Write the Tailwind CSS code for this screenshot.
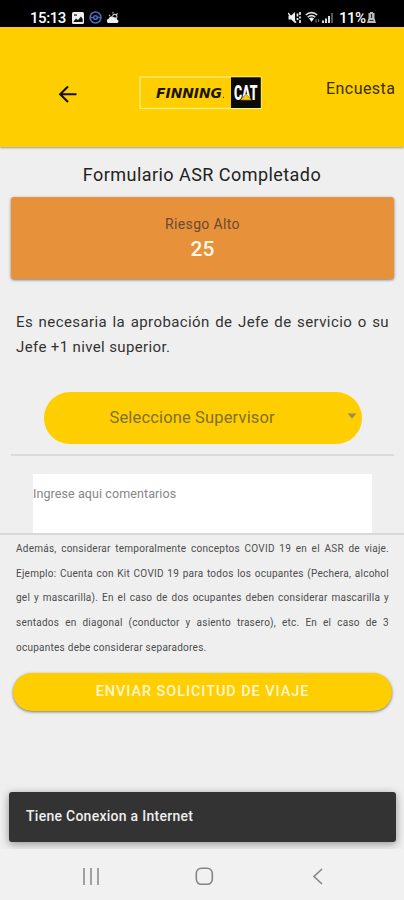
<!DOCTYPE html>
<html lang="es">
<head>
<meta charset="utf-8">
<meta name="viewport" content="width=device-width, initial-scale=1">
<title>Formulario ASR</title>
<script src="https://cdn.jsdelivr.net/npm/@tailwindcss/browser@4"></script>
</head>
<body class="w-[404px] h-[900px] overflow-hidden bg-[#efefef] font-[Roboto,sans-serif] text-[#222] flex flex-col">
  <!-- Status bar -->
  <div class="h-[27px] shrink-0 bg-black text-white flex items-center justify-between pl-[30px] pr-[28px] pt-[8px]">
    <div class="flex items-center">
      <span class="w-[36px] text-[15px] leading-[18px] font-medium tracking-[-0.45px] whitespace-nowrap">15:13</span>
      <svg class="ml-[6px]" width="12" height="12" viewBox="0 0 12 12"><rect width="12" height="12" rx="1.5" fill="#eee"/><path d="M1.5 9.5 4 6.5 6 8l3-3.5 1.7 2.5v3H1.5z" fill="#151515"/><path d="M2 3h3" stroke="#222" stroke-width="1.3"/></svg>
      <svg class="ml-[5px]" width="13" height="13" viewBox="0 0 13 13" fill="none" stroke="#5068b5" stroke-width="1.5"><circle cx="6.5" cy="6.5" r="5.5"/><circle cx="6.5" cy="6.5" r="1.8"/><path d="M1 6.5h3.5M8.5 6.5H12"/></svg>
      <svg class="ml-[5px]" width="12" height="12" viewBox="0 0 12 12"><path d="M2 11a2 2 0 0 1-.4-4A3 3 0 0 1 7 5.5a2.700 2.700 0 0 1 3.300 2.200A1.700 1.700 0 0 1 10 11z" fill="#eee"/><path d="M5.500 4a2.300 2.300 0 0 1 4.500.5c0 .8-.2 1.200-.5 1.500M2 3l1 1M6 0v1.500M10.500 1.500l-1 1" fill="none" stroke="#ccc" stroke-width="1.100"/></svg>
    </div>
    <div class="flex items-center">
      <svg width="14" height="13" viewBox="0 0 14 13"><path d="M.5 4.500h2.700L7 1v11L3.200 8.500H.5z" fill="#eee"/><path d="m0 2 8 9.500" fill="none" stroke="#eee" stroke-width="1.200"/><path d="M9.500 2.500v3M12 1v3M9.500 7v2M12 5.500v2M12 9v3" fill="none" stroke="#eee" stroke-width="1.700"/></svg>
      <svg class="ml-[3px]" width="16" height="13" viewBox="0 0 16 13"><path d="M.8 4A8 8 0 0 1 12.200 4M2.800 6.200a5.200 5.200 0 0 1 7.400 0" fill="none" stroke="#ddd" stroke-width="1.600"/><path d="M4 7.500a3.400 3.400 0 0 1 5 0L6.500 11z" fill="#eee"/><path d="M11 8.500v3M13.500 8v3" stroke="#777" stroke-width="1.200"/></svg>
      <svg class="ml-[1px]" width="12" height="13" viewBox="0 0 12 13"><path d="M0 9.500h2V12H0zM3 7.500h2V12H3zM6 5h2v7H6z" fill="#ddd"/><path d="M9 2h2v10H9z" fill="#555"/></svg>
      <span class="ml-[5px] w-[28px] text-[15px] leading-[18px] font-medium tracking-[-0.5px] whitespace-nowrap">11%</span>
      <svg width="9" height="13" viewBox="0 0 9 13"><path d="M3 1h3v1h1.500v5L9 12H0l1.500-5V2H3z" fill="#bbb"/><path d="M4.500 3v4M2.500 9.500h4" stroke="#333" stroke-width="1.200"/></svg>
    </div>
  </div>

  <!-- App header -->
  <header class="h-[120px] shrink-0 bg-[#ffce00] shadow-[0_1px_2px_rgba(0,0,0,0.35)] flex items-start">
    <svg class="ml-[58px] mt-[58px] shrink-0" width="19" height="18" viewBox="0 0 19 18" fill="none" stroke="#141000" stroke-width="2.100"><path d="M18.500 9.200H2.500M10 1.500 2.200 9.200 10 17"/></svg>
    <svg class="ml-[62px] mt-[49px] shrink-0 overflow-visible" width="123" height="34" viewBox="0 0 123 34">
      <rect x="1" y="1" width="121" height="31.500" fill="none" stroke="#fff08a" stroke-width="1.200"/>
      <rect x="92" y="1.300" width="29.800" height="30.700" fill="#0a0a0a"/>
      <text x="17" y="21.800" textLength="66" lengthAdjust="spacingAndGlyphs" font-family="DejaVu Sans, sans-serif" font-weight="700" font-style="italic" font-size="13.500" fill="#1a1400">FINNING</text>
      <circle cx="84.500" cy="21.300" r=".6" fill="#1a1400"/>
      <text x="95" y="23.500" textLength="23.500" lengthAdjust="spacingAndGlyphs" font-family="Roboto, sans-serif" font-weight="900" font-size="20" fill="#fff">CAT</text>
      <path d="M101 24.200 107 18.300 113 24.200z" fill="#ffce00" stroke="#0a0a0a" stroke-width=".4"/>
    </svg>
    <span class="ml-[64px] mt-[51px] text-[16px] leading-[22px] tracking-[0.450px] text-[#3a3000] whitespace-nowrap">Encuesta</span>
  </header>

  <main class="h-[702px] shrink-0 flex flex-col">
    <h1 class="mt-[16px] h-[24px] text-center text-[18px] leading-[24px] tracking-[0.450px] text-[#222]">Formulario ASR Completado</h1>
    <section class="mt-[10px] ml-[11px] h-[82px] mr-[10px] rounded-[3px] bg-[#e8913b] shadow-[0_1px_3px_rgba(0,0,0,0.5)] text-center pt-[17px]">
      <div class="text-[14px] leading-[20px] tracking-[0.350px] text-[#694b32]">Riesgo Alto</div>
      <div class="mt-[1px] text-[21px] leading-[28px] font-medium text-[#fff8e8]">25</div>
    </section>
    <div class="mt-[31px] ml-[16px] mr-[15px] text-[15px] leading-[25px] text-[#333]">
      <p class="[text-align-last:justify] whitespace-nowrap tracking-[0.400px]">Es necesaria la aprobación de Jefe de servicio o su</p>
      <p class="tracking-[0.370px]">Jefe +1 nivel superior.</p>
    </div>
    <div class="mt-[32px] ml-[43.500px] w-[318px] h-[52px] shrink-0 rounded-full bg-[#ffce00] flex items-center">
      <span class="ml-[66px] w-[168px] text-[16.500px] leading-[24px] tracking-[0.150px] text-[#80702a] whitespace-nowrap">Seleccione Supervisor</span>
      <svg class="ml-[69px] mb-[5px]" width="10" height="6" viewBox="0 0 10 6"><path d="M.5.5h9L5 5.500z" fill="#9a8c55"/></svg>
    </div>
    <div class="mt-[10px] ml-[11px] mr-[10px] h-[2px] bg-[#dadada]"></div>
    <div class="mt-[18px] ml-[33px] w-[339px] h-[59px] bg-white pt-[10px] text-[12.500px] leading-[20px] tracking-[0.090px] text-[#868686]">Ingrese aqui comentarios</div>
    <div class="h-[1.500px] bg-[#d8d8d8]"></div>
    <div class="mt-[2.500px] ml-[16px] mr-[15px] text-[10px] leading-[24.700px] text-[#4d4d4d] whitespace-nowrap">
      <p class="[text-align-last:justify] tracking-[0.250px]">Además, considerar temporalmente conceptos COVID 19 en el ASR de viaje.</p>
      <p class="[text-align-last:justify] tracking-[0.250px]">Ejemplo: Cuenta con Kit COVID 19 para todos los ocupantes (Pechera, alcohol</p>
      <p class="[text-align-last:justify] tracking-[0.250px]">gel y mascarilla). En el caso de dos ocupantes deben considerar mascarilla y</p>
      <p class="[text-align-last:justify] tracking-[0.250px]">sentados en diagonal (conductor y asiento trasero), etc. En el caso de 3</p>
      <p class="tracking-[0.250px]">ocupantes debe considerar separadores.</p>
    </div>
    <button class="mt-[12.500px] ml-[13px] w-[379px] h-[38px] shrink-0 rounded-full bg-[#ffce00] shadow-[0_1px_3px_rgba(0,0,0,0.5)] text-[14.500px] font-medium leading-[36px] tracking-[0.920px] text-[#fff6cf]">ENVIAR SOLICITUD DE VIAJE</button>
    <div role="status" class="mt-auto mb-[7px] ml-[9px] w-[387px] h-[50px] shrink-0 rounded-[3px] bg-[#333] shadow-[0_2px_9px_rgba(0,0,0,0.4)] pl-[17px] text-[14px] leading-[49px] font-medium tracking-[0.270px] text-[#eee]">Tiene Conexion a Internet</div>
  </main>

  <!-- Navigation bar -->
  <nav class="relative h-[51px] shrink-0 bg-[#f1f1f1] flex items-start">
    <svg class="ml-[82px] mt-[19px]" width="18" height="17" viewBox="0 0 18 17" stroke="#8c8c8c" stroke-width="1.600"><path d="M2 0v17M9 0v17M16 0v17"/></svg>
    <svg class="ml-[95px] mt-[18px]" width="19" height="19" viewBox="0 0 19 19" fill="none" stroke="#858585" stroke-width="1.600"><rect x="1.300" y="1.300" width="16" height="16" rx="5"/></svg>
    <svg class="ml-[98px] mt-[19px]" width="11" height="17" viewBox="0 0 11 17" fill="none" stroke="#858585" stroke-width="1.600"><path d="M10 1 2 8.500l8 7.500"/></svg>
  </nav>
</body>
</html>
